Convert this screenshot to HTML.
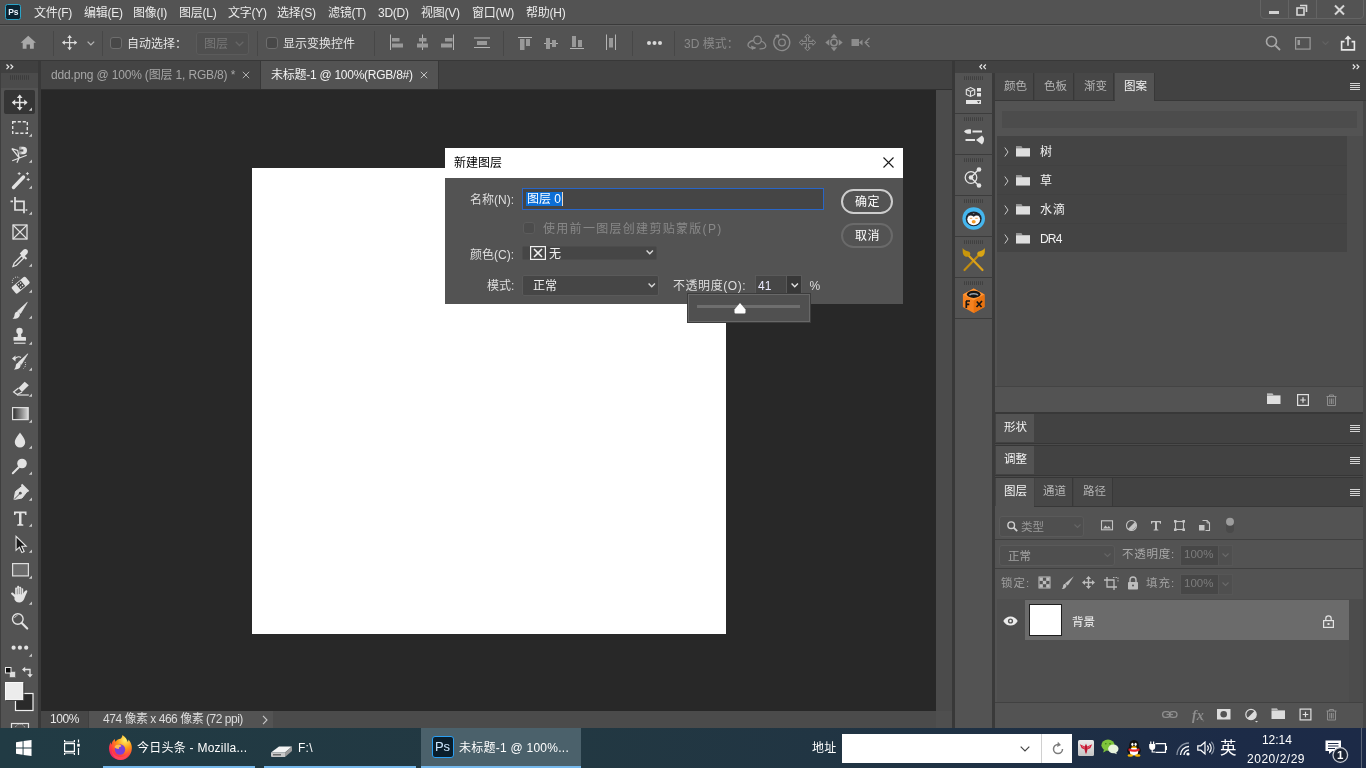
<!DOCTYPE html>
<html lang="zh-CN">
<head>
<meta charset="utf-8">
<title>Photoshop</title>
<style>
*{box-sizing:border-box;margin:0;padding:0}
html,body{width:1366px;height:768px;overflow:hidden;background:#535353}
body{position:relative;font-family:"Liberation Sans","Noto Sans CJK SC",sans-serif;font-size:12px;color:#e6e6e6;-webkit-font-smoothing:antialiased}
.a{position:absolute}
.t{position:absolute;white-space:nowrap;line-height:16px}
svg{position:absolute;overflow:visible}
/* regions */
#menubar{left:0;top:0;width:1366px;height:24px;background:#535353}
#optbar{left:0;top:25px;width:1366px;height:36px;background:#535353;border-top:1px solid #5e5e5e}
#line1{left:0;top:24px;width:1366px;height:1px;background:#3a3a3a}
#line2{left:0;top:60px;width:1366px;height:1px;background:#383838}
#strip{left:0;top:61px;width:1366px;height:12px;background:#424242}
#toolbar{left:0;top:73px;width:38px;height:655px;background:#535353}
#tabbar{left:40.500px;top:61px;width:911.500px;height:29px;background:#424242}
#canvasbg{left:40.500px;top:89.500px;width:895.500px;height:621px;background:#282828}
#doc{left:252px;top:168px;width:474px;height:466px;background:#fff}
#vscroll{left:936px;top:90px;width:16px;height:638px;background:#4b4b4b}
#status{left:40.500px;top:711px;width:895.500px;height:17px;background:#535353}
#taskbar{left:0;top:728px;width:1366px;height:40px;background:linear-gradient(90deg,#213b44 0%,#223842 42%,#213543 60%,#1e2f45 78%,#1c2b47 90%,#1c2a47 100%)}

.mn{top:4.500px;font-size:12px;color:#ebebeb;letter-spacing:-0.250px}
.vs{top:31px;width:1px;height:25px;background:#474747}
.cb{width:12px;height:12px;border:1px solid #6e6e6e;border-radius:3px;background:#484848}

.tk{top:740px;font-size:12px;color:#fff;letter-spacing:0.250px}
.ul{top:766px;height:2px;background:#76b9ed}

.ptab{top:73px;height:27px;background:#474747;border-right:1px solid #383838}
.ltab{top:478px;height:28px;background:#474747;border-right:1px solid #383838}
.pt{font-size:11.500px}
.mi{width:10px;height:7px;background:repeating-linear-gradient(180deg,#d4d4d4 0,#d4d4d4 1px,transparent 1px,transparent 2px)}

.vb{left:1180px;width:38px;height:21px;background:#474747;border:1px solid #565656;border-right:0}
.vb2{left:1218px;width:15px;height:21px;background:#4f4f4f;border:1px solid #565656}

.dl{font-size:12px;color:#dedede}
</style>
</head>
<body>
<div id="wrap" style="position:absolute;left:0;top:0;width:1366px;height:768px;will-change:transform">
<div class="a" id="menubar"></div>
<div class="a" id="line1"></div>
<div class="a" id="optbar"></div>
<div class="a" id="line2"></div>
<div class="a" id="strip"></div>
<div class="a" id="toolbar"></div>
<div class="a" id="tabbar"></div>
<div class="a" id="canvasbg"></div>
<div class="a" id="doc"></div>
<div class="a" id="vscroll"></div>
<div class="a" id="status"></div>

<!-- MENU BAR -->
<div class="a" style="left:5px;top:4px;width:16px;height:15.500px;background:#0b2433;border:1.500px solid #2ba4c8;border-radius:2.500px"></div>
<div class="t" style="left:8.300px;top:3.700px;font-size:8.500px;font-weight:bold;color:#eef6ff;letter-spacing:-0.2px">Ps</div>
<div class="t mn" style="left:34px">文件(F)</div>
<div class="t mn" style="left:84px">编辑(E)</div>
<div class="t mn" style="left:133px">图像(I)</div>
<div class="t mn" style="left:179px">图层(L)</div>
<div class="t mn" style="left:228px">文字(Y)</div>
<div class="t mn" style="left:277px">选择(S)</div>
<div class="t mn" style="left:328px">滤镜(T)</div>
<div class="t mn" style="left:378px">3D(D)</div>
<div class="t mn" style="left:421px">视图(V)</div>
<div class="t mn" style="left:472px">窗口(W)</div>
<div class="t mn" style="left:526px">帮助(H)</div>
<!-- window controls -->
<div class="a" style="left:1260px;top:-2px;width:104px;height:21px;border:1px solid #646464;border-radius:0 0 4px 4px"></div>
<div class="a" style="left:1288px;top:0;width:1px;height:18px;background:#646464"></div>
<div class="a" style="left:1316px;top:0;width:1px;height:18px;background:#646464"></div>
<div class="a" style="left:1269px;top:11px;width:10px;height:3px;background:#d0d0d0"></div>
<svg style="left:1296px;top:4px" width="12" height="12" viewBox="0 0 12 12"><path d="M4 1.5h6.5v6.5" fill="none" stroke="#d6d6d6" stroke-width="1.6"/><rect x="1" y="4" width="7" height="7" fill="none" stroke="#d6d6d6" stroke-width="1.6"/></svg>
<svg style="left:1334px;top:5px" width="11" height="10" viewBox="0 0 11 10"><path d="M1 0.5L10 9.5M10 0.5L1 9.5" fill="none" stroke="#d6d6d6" stroke-width="2"/></svg>

<!-- OPTIONS BAR -->
<svg style="left:19.500px;top:35px" width="16.500" height="14.500" viewBox="0 0 19 17"><path d="M9.5 1L0.5 9h2.5v7h4.5v-5h4v5h4.500v-7h2.500z" fill="#a8a8a8"/></svg>
<div class="a vs" style="left:53px"></div>
<svg style="left:62px;top:35px" width="15.200" height="15.200" viewBox="0 0 19 19"><path d="M9.500 1v17M1 9.500h17" stroke="#dcdcdc" stroke-width="1.500" fill="none"/><path d="M9.500 0l3 3.600h-6zM9.500 19l3-3.600h-6zM0 9.500l3.600-3v6zM19 9.500l-3.600-3v6z" fill="#dcdcdc"/></svg>
<svg style="left:86.500px;top:41px" width="7.800" height="5.200" viewBox="0 0 9 6"><path d="M0.700 0.700l3.800 3.800 3.800-3.800" fill="none" stroke="#b4b4b4" stroke-width="1.500"/></svg>
<div class="a vs" style="left:102px"></div>
<div class="a cb" style="left:110px;top:37px"></div>
<div class="t" style="left:127px;top:36px;font-size:12px;color:#e4e4e4">自动选择：</div>
<div class="a" style="left:196px;top:32px;width:53px;height:23px;border:1px solid #5b5b5b;border-radius:3px;background:#4f4f4f"></div>
<div class="t" style="left:204px;top:36px;font-size:12px;color:#777">图层</div>
<svg style="left:235px;top:41px" width="9" height="6" viewBox="0 0 9 6"><path d="M0.700 0.700l3.800 3.800 3.800-3.800" fill="none" stroke="#666" stroke-width="1.300"/></svg>
<div class="a vs" style="left:257px"></div>
<div class="a cb" style="left:266px;top:37px"></div>
<div class="t" style="left:283px;top:36px;font-size:12px;color:#e4e4e4">显示变换控件</div>
<div class="a vs" style="left:374px"></div>
<svg style="left:380px;top:28px" width="300" height="30" viewBox="380 28 300 30">
<g fill="#999" stroke="none">
<rect x="390" y="34.500" width="1" height="15.500" fill="#b4b4b4"/><rect x="392" y="38" width="7.500" height="3.500"/><rect x="392" y="43.500" width="11" height="4"/>
<rect x="422" y="34.500" width="1" height="15.500" fill="#b4b4b4"/><rect x="419" y="38" width="7.500" height="3.500"/><rect x="417" y="43.500" width="11" height="4"/>
<rect x="453" y="34.500" width="1" height="15.500" fill="#b4b4b4"/><rect x="445" y="38" width="7.500" height="3.500"/><rect x="441" y="43.500" width="11" height="4"/>
<rect x="474" y="37.500" width="16" height="1" fill="#b4b4b4"/><rect x="474" y="47" width="16" height="1" fill="#b4b4b4"/><rect x="477" y="41" width="10" height="4"/>
<rect x="518" y="37" width="14" height="1" fill="#b4b4b4"/><rect x="520" y="39" width="4.500" height="11"/><rect x="526" y="39" width="4" height="7"/>
<rect x="544" y="43" width="14" height="1" fill="#b4b4b4"/><rect x="546" y="38" width="4" height="11"/><rect x="552" y="40" width="4" height="7"/>
<rect x="570" y="48" width="14" height="1" fill="#b4b4b4"/><rect x="572" y="36" width="4" height="11"/><rect x="578" y="40" width="4" height="7"/>
<rect x="606" y="34.500" width="1" height="15.500" fill="#b4b4b4"/><rect x="615" y="34.500" width="1" height="15.500" fill="#b4b4b4"/><rect x="609" y="38" width="4" height="9.500"/>
</g></svg>
<div class="a vs" style="left:503px"></div>
<div class="a vs" style="left:632px"></div>
<div class="a" style="left:647px;top:41px;width:3.500px;height:3.500px;border-radius:2px;background:#d8d8d8;box-shadow:5.500px 0 0 #d8d8d8,11px 0 0 #d8d8d8"></div>
<div class="a vs" style="left:674px"></div>
<div class="t" style="left:684px;top:36px;font-size:12px;color:#8a8a8a">3D 模式：</div>
<svg style="left:745px;top:30px" width="130" height="26" viewBox="745 30 130 26">
<g fill="none" stroke="#8c8c8c" stroke-width="1.300">
<circle cx="757.500" cy="40" r="3.800"/><path d="M753.500 40.500c-4 0.500-6.500 3.500-5 6 1 1.500 4 2 7 1.500M761 41c3 1 5.500 3.500 4.500 6-0.800 1.500-3 2-6 1.800"/><path d="M751 45.500l1 4.500 4-2.500z" fill="#8c8c8c" stroke="none"/>
<path d="M776.500 36.500a8 8 0 1 0 5.500-2"/><circle cx="782" cy="42.500" r="3.300"/><path d="M775 35l4.500-0.500-1 4z" fill="#8c8c8c" stroke="none"/>
<path d="M807.5 34.2L810.3 37.2H808.6V41.4H812.8V39.7L815.8 42.5 812.8 45.3V43.6H808.6V47.8H810.3L807.5 50.8 804.700 47.8H806.4V43.6H802.2V45.3L799.2 42.5 802.2 39.7V41.4H806.4V37.2H804.700Z" stroke-width="1"/>
<circle cx="834" cy="42.500" r="3.200" stroke-width="1.500"/><path d="M834 33.800l3.300 4h-6.600zM834 51.200l3.300-4h-6.600zM825.300 42.500l4-3.300v6.600zM842.700 42.500l-4-3.300v6.600z" fill="#8c8c8c" stroke="none"/>
<rect x="851.500" y="39" width="7.500" height="7" fill="#8c8c8c" stroke="none"/><path d="M859 42.500l3.500-3v6z" fill="#8c8c8c" stroke="none"/><path d="M869.500 38l-4.500 4.500 4.500 4.500" stroke-width="1.100"/><path d="M866 42.500h2.500" stroke-width="1"/>
</g></svg>
<svg style="left:1265px;top:35px" width="16" height="16" viewBox="0 0 16 16"><circle cx="6.500" cy="6.500" r="5" fill="none" stroke="#a8a8a8" stroke-width="1.600"/><path d="M10.300 10.300L15 15" stroke="#a8a8a8" stroke-width="1.800"/></svg>
<svg style="left:1295px;top:37px" width="16" height="13" viewBox="0 0 16 13"><rect x="0.600" y="0.600" width="14.500" height="11.500" fill="none" stroke="#9a9a9a" stroke-width="1.200"/><rect x="2.500" y="3" width="2.500" height="5" fill="#9a9a9a"/></svg>
<svg style="left:1322px;top:41px" width="7" height="5" viewBox="0 0 7 5"><path d="M0.500 0.500l3 3 3-3" fill="none" stroke="#626262" stroke-width="1.100"/></svg>
<svg style="left:1340px;top:34.500px" width="16" height="16" viewBox="0 0 17 18"><path d="M4.500 7.500H1.300V16.700H15.700V7.500H12.500" fill="none" stroke="#e8e8e8" stroke-width="1.800"/><path d="M8.500 12V3" stroke="#e8e8e8" stroke-width="1.800"/><path d="M8.500 0.500l4 4.200h-8z" fill="#e8e8e8"/></svg>
<div class="a" style="left:0;top:61px;width:38px;height:12px;background:#404040"></div>
<div class="a" style="left:0;top:73px;width:38px;height:15px;background:#4b4b4b"></div><div class="a" style="left:0;top:61px;width:1px;height:667px;background:#3e3e3e"></div>
<div class="a" style="left:38px;top:61px;width:2.500px;height:667px;background:#393939"></div>
<div class="a" style="left:4px;top:90px;width:31px;height:23.500px;background:#353535;border-radius:2px"></div>
<svg style="left:0;top:61px" width="40" height="667" viewBox="0 61 40 667">
<g fill="none" stroke="#e2e2e2" stroke-width="1.300" stroke-linecap="butt">
<!-- >> -->
<path d="M6.500 64.500l2.300 2.300-2.300 2.300M10.500 64.500l2.300 2.300-2.300 2.300" stroke="#e8e8e8" stroke-width="1.200"/>
<!-- grip -->
<path d="M10 77.500h19.500" stroke="#3c3c3c" stroke-width="4.500" stroke-dasharray="1 1"/>
<!-- 1 move -->
<path d="M19.700 95.500v14M12.800 102.500h13.800" stroke-width="1.500"/>
<path d="M19.700 94.500l2.900 3.400h-5.800zM19.700 110.500l2.900-3.400h-5.800zM11.800 102.500l3.400-2.900v5.800zM27.600 102.500l-3.400-2.900v5.800z" fill="#e2e2e2" stroke="none"/>
<!-- 2 marquee -->
<rect x="12.700" y="121.700" width="14.600" height="11.600" stroke-dasharray="3.200 1.800" stroke-width="1.400"/>
<!-- 3 magnetic lasso -->
<path d="M11.800 148.600L19 157.500M11.800 148.600L17.700 150.400L19 157M12.200 160.700L26.700 155.200M16.900 162.700L19.600 156.800" stroke-width="1.200"/>
<path d="M19.500 146.800h3.800a3.700 3.700 0 0 1 0 7.400h-3.800z" fill="#e2e2e2" stroke="none"/><rect x="19.500" y="149.400" width="3.800" height="2.200" fill="#535353" stroke="none"/><rect x="20.300" y="147.400" width="1" height="1.200" fill="#535353" stroke="none"/><rect x="20.300" y="152.400" width="1" height="1.200" fill="#535353" stroke="none"/>
<!-- 4 wand -->
<path d="M13.500 187.500l10-10.500" stroke-width="3.400" stroke-linecap="round"/>
<path d="M19.200 172.100v3M17.700 173.600h3M27.400 172.100v3M25.900 173.600h3M28.200 178v3M26.700 179.500h3" stroke-width="0.900"/>
<!-- 5 crop -->
<path d="M15 197v13h9.500M10.500 201.300h2.500M15.800 201.300h8.200v12M25.500 210h1.800" stroke-width="1.700"/>
<!-- 6 frame -->
<rect x="13" y="225" width="14" height="14" stroke-width="1.300"/><path d="M13 225l14 14M27 225l-14 14" stroke-width="1.100"/>
<!-- 7 eyedropper -->
<path d="M13 266.500l1.200-3.500 7.300-7.300 2.300 2.300-7.300 7.300z" stroke-width="1.300"/>
<path d="M21 253.500l5.500 5.500M23.500 256l3-3a1.700 1.700 0 0 0-2.500-2.500l-3 3z" stroke-width="1.800" fill="#e2e2e2"/>
<!-- 8 spot heal -->
<g transform="rotate(-40 20.500 285)"><rect x="11.500" y="281" width="18" height="8.500" rx="1.500" fill="#e2e2e2" stroke="none"/><rect x="17.500" y="281.800" width="6" height="6.900" fill="#444" stroke="none"/>
<circle cx="19.200" cy="283.600" r="0.800" fill="#e2e2e2" stroke="none"/><circle cx="21.800" cy="283.600" r="0.800" fill="#e2e2e2" stroke="none"/><circle cx="19.200" cy="286.600" r="0.800" fill="#e2e2e2" stroke="none"/><circle cx="21.800" cy="286.600" r="0.800" fill="#e2e2e2" stroke="none"/></g>
<path d="M12.500 283a4.500 4.500 0 0 1 7-5" stroke-width="1" stroke-dasharray="1 1.200"/>
<!-- 9 brush -->
<path d="M27.300 302.300L20.600 313.400L17.400 311.200z" fill="#e2e2e2" stroke-width="0.700"/>
<path d="M16.600 311.800c2-0.600 3.800 1.200 3.200 3.400-0.900 3.200-4.400 3.800-7.300 3.600 1.700-1.300 1.800-2.600 2.100-4.200 0.200-1.200 0.800-2.400 2-2.800z" fill="#e2e2e2" stroke="none"/>
<!-- 10 stamp -->
<circle cx="19.500" cy="331" r="3.200" fill="#e2e2e2" stroke="none"/><path d="M18 333.500h3l0.500 4h-4z" fill="#e2e2e2" stroke="none"/><rect x="13.500" y="337" width="12.500" height="3.800" rx="0.600" fill="#e2e2e2" stroke="none"/><path d="M14 343.200h11.500" stroke-width="1.200"/>
<!-- 11 history brush -->
<path d="M27.800 353.800L21.200 364.600L18.200 362.500z" fill="#e2e2e2" stroke-width="0.700"/>
<path d="M17.600 363c1.900-0.600 3.500 1.100 3 3.100-0.800 3-4 3.600-6.700 3.400 1.600-1.200 1.700-2.400 1.900-3.900 0.200-1.100 0.700-2.200 1.800-2.600z" fill="#e2e2e2" stroke="none"/>
<path d="M12 358.500l3.500-3v6z" fill="#e2e2e2" stroke="none"/><path d="M15 358.500c2-1.800 4.500-2 6-1" stroke-width="1.100"/><path d="M25 362c1.200 2.200 0.500 5-1.500 6.500" stroke-width="0.900" stroke-dasharray="1 1.100"/>
<!-- 12 eraser -->
<path d="M18.500 388L24.700 381.800L28.800 385.200L22 392z" fill="#e2e2e2" stroke="none"/><path d="M18.500 388L13.600 392L17.100 394.500L22 392" stroke-width="1.200"/><path d="M17 395h11.800" stroke-width="1.200"/>
<!-- 13 gradient -->
<rect x="12.600" y="407.600" width="15.600" height="12" fill="url(#gr1)" stroke="#dedede" stroke-width="1.200"/>
<!-- 14 blur drop -->
<path d="M20 432.500c2 3 5.200 6.500 5.200 9.700a5.200 5.200 0 0 1-10.400 0c0-3.200 3.200-6.700 5.200-9.700z" fill="#e2e2e2" stroke="none"/>
<!-- 15 dodge -->
<circle cx="22" cy="463.500" r="4.800" fill="#e2e2e2" stroke="none"/><path d="M18.800 467.200l-6 6" stroke-width="2" stroke-linecap="round"/>
<!-- 16 pen -->
<path d="M14 499.500l1.500-8 7-5.500 5 5-5.500 7z" fill="#e2e2e2" stroke-width="1"/><path d="M14.300 499.200l5.700-5.700" stroke="#535353" stroke-width="1"/><circle cx="20.300" cy="493.200" r="1.400" fill="#535353" stroke="none"/><path d="M21.500 484.500l7 7" stroke-width="2"/>
<!-- 17 T -->
<path d="M14 511.500h12.500v3.500h-1.300l-0.600-1.800h-3.100v10.800l1.800 0.500v1.200h-6.100v-1.200l1.800-0.500v-10.800h-3.100l-0.600 1.800h-1.300z" fill="#e2e2e2" stroke="none"/>
<!-- 18 path select arrow -->
<g transform="translate(21 544.5) scale(0.9) translate(-21 -544.5)"><path d="M15.500 535.500v15.500l3.800-3.500 2.700 6 2.500-1.200-2.700-5.800h5z" fill="#1a1a1a" stroke="#e8e8e8" stroke-width="1.200" stroke-linejoin="miter"/></g>
<!-- 19 rectangle -->
<rect x="12.600" y="563.600" width="15.800" height="12.300" fill="#6c6c6c" stroke="#dedede" stroke-width="1.200"/>
<!-- 20 hand -->
<g transform="translate(20 595.5) scale(1.15) translate(-20 -595)"><path d="M15.200 596.500l-2.700-2.500c-0.800-0.800 0.300-2.100 1.300-1.300l2 1.600v-5.300c0-1.200 1.700-1.200 1.700 0v-1.400c0-1.300 1.800-1.300 1.800 0v0.700c0-1.300 1.800-1.300 1.800 0v1.300c0-1.200 1.700-1.200 1.700 0v3.900c0.600-1.500 1.500-2.800 2.600-3 0.900-0.100 1.200 0.700 0.800 1.400-1.100 2-1.700 4.200-2.700 6.400-0.800 1.800-2 2.700-4.100 2.700-2.400 0-3.200-0.800-4.200-2.500z" fill="#e2e2e2" stroke="none"/>
<path d="M17.600 589v5M19.400 588.300v5.500M21.200 589v5" stroke="#535353" stroke-width="0.500"/></g>
<!-- 21 zoom -->
<circle cx="17.800" cy="619" r="5.300" stroke-width="1.400"/><path d="M21.700 623l5.500 5.500" stroke-width="2.200" stroke-linecap="round"/><path d="M14.500 618a3.500 3.500 0 0 1 3-2.500" stroke-width="0.800"/>
<!-- 22 dots -->
<circle cx="13.600" cy="647.700" r="2.100" fill="#e2e2e2" stroke="none"/><circle cx="19.900" cy="647.700" r="2.100" fill="#e2e2e2" stroke="none"/><circle cx="26.200" cy="647.700" r="2.100" fill="#e2e2e2" stroke="none"/>
<!-- swatches mini -->
<rect x="9.500" y="671.500" width="6" height="6" fill="#dcdcdc" stroke="#555" stroke-width="0.600"/><rect x="5.500" y="667.500" width="5.500" height="5.500" fill="#0a0a0a" stroke="#e8e8e8" stroke-width="1"/>
<path d="M24.500 669.500h5.500v5.500" stroke-width="1.300"/><path d="M22 669.500l3.200-2.800v5.600zM30 677.500l-2.800-3.200h5.600z" fill="#e2e2e2" stroke="none"/>
<!-- fg/bg -->
<rect x="15.500" y="693.500" width="17.500" height="17" fill="#2a2a2a" stroke="#f0f0f0" stroke-width="1.200"/>
<rect x="5.500" y="682.500" width="17.500" height="17.500" fill="#ececec" stroke="#fafafa" stroke-width="1"/><path d="M23.900 682.500v18H5.500" stroke="#3a3a3a" stroke-width="0.900"/>
<!-- quick mask -->
<rect x="11.500" y="723.500" width="17" height="10" stroke-width="1.200"/><path d="M15 729a5 5 0 0 1 10 0" stroke-width="0.900" stroke-dasharray="1 1"/>
</g>
<!-- flyout triangles -->
<g fill="#c8c8c8">
<path d="M32 107.5v3.200h-3.200z"/><path d="M32 133.5v3.200h-3.200z"/><path d="M32 159.5v3.200h-3.200z"/><path d="M32 185.5v3.200h-3.200z"/><path d="M32 211.5v3.200h-3.200z"/><path d="M32 263.5v3.200h-3.200z"/><path d="M32 289.5v3.200h-3.200z"/><path d="M32 315.5v3.200h-3.200z"/><path d="M32 341.5v3.200h-3.200z"/><path d="M32 367.5v3.200h-3.200z"/><path d="M32 393.5v3.200h-3.200z"/><path d="M32 419.5v3.200h-3.200z"/><path d="M32 445.5v3.200h-3.200z"/><path d="M32 471.5v3.200h-3.200z"/><path d="M32 497.5v3.200h-3.200z"/><path d="M32 523.5v3.200h-3.200z"/><path d="M32 549.5v3.200h-3.200z"/><path d="M32 575.5v3.200h-3.200z"/><path d="M32 601.5v3.200h-3.200z"/><path d="M32 653.5v3.200h-3.200z"/>
</g>
<defs><linearGradient id="gr1" x1="0" x2="1" y1="0" y2="0"><stop offset="0" stop-color="#2a2a2a"/><stop offset="1" stop-color="#d8d8d8"/></linearGradient></defs>
</svg>


<!-- TABS -->
<div class="a" style="left:40.500px;top:61px;width:219.500px;height:28px;background:#444"></div>
<div class="a" style="left:260px;top:61px;width:178px;height:28px;background:#535353"></div>
<div class="a" style="left:260px;top:61px;width:1px;height:28px;background:#383838"></div>
<div class="a" style="left:438px;top:61px;width:1px;height:28px;background:#383838"></div>
<div class="a" style="left:40.500px;top:89px;width:911.500px;height:1px;background:#303030"></div>
<div class="t" id="tab1" style="left:51px;top:67px;font-size:12px;color:#a6a6a6;letter-spacing:-0.160px">ddd.png @ 100% (图层 1, RGB/8) *</div>
<svg style="left:242px;top:71px" width="8" height="8" viewBox="0 0 8 8"><path d="M0.800 0.800l6.400 6.400M7.200 0.800l-6.400 6.400" stroke="#b0b0b0" stroke-width="1"/></svg>
<div class="t" id="tab2" style="left:271px;top:67px;font-size:12px;color:#f2f2f2;letter-spacing:-0.260px">未标题-1 @ 100%(RGB/8#)</div>
<svg style="left:420px;top:71px" width="8" height="8" viewBox="0 0 8 8"><path d="M0.800 0.800l6.400 6.400M7.200 0.800l-6.400 6.400" stroke="#c4c4c4" stroke-width="1"/></svg>
<!-- STATUS -->
<div class="a" style="left:40.500px;top:711px;width:47.500px;height:17px;background:#474747"></div>
<div class="a" style="left:88px;top:711px;width:1px;height:17px;background:#404040"></div>
<div class="t" id="st1" style="left:50px;top:711px;font-size:12px;color:#e8e8e8;letter-spacing:-0.400px">100%</div>
<div class="t" id="st2" style="left:103px;top:711px;font-size:12px;color:#dcdcdc;letter-spacing:-0.480px">474 像素 x 466 像素 (72 ppi)</div>
<svg style="left:262px;top:715px" width="6" height="10" viewBox="0 0 6 10"><path d="M1 0.800l4 4.200-4 4.200" fill="none" stroke="#c8c8c8" stroke-width="1.100"/></svg>
<div class="a" style="left:273px;top:711px;width:663px;height:17px;background:#4b4b4b"></div><div class="a" style="left:936px;top:711px;width:16px;height:17px;background:#4f4f4f"></div>



<!-- RIGHT SIDE -->
<div class="a" style="left:936px;top:90px;width:16px;height:621px;background:#4b4b4b"></div>
<div class="a" style="left:952px;top:61px;width:3px;height:667px;background:#383838"></div>
<div class="a" style="left:955px;top:61px;width:411px;height:12px;background:#424242"></div>
<div class="a" style="left:955px;top:73px;width:38px;height:655px;background:#535353"></div>
<div class="a" style="left:992px;top:73px;width:3px;height:655px;background:#3a3a3a"></div>
<svg style="left:979px;top:64px" width="8" height="6" viewBox="0 0 8 6"><path d="M3 0.500L0.800 2.800 3 5.100M6.800 0.500L4.600 2.800 6.800 5.100" fill="none" stroke="#e8e8e8" stroke-width="1.200"/></svg>
<svg style="left:1352px;top:64px" width="8" height="6" viewBox="0 0 8 6"><path d="M0.800 0.500L3 2.800 0.800 5.100M4.600 0.500L6.800 2.800 4.600 5.100" fill="none" stroke="#e8e8e8" stroke-width="1.200"/></svg>
<!-- icon strip cells -->
<svg style="left:955px;top:73px" width="38" height="250" viewBox="955 73 38 250">
<g stroke="#3c3c3c" stroke-width="1"><path d="M955 113.500h38M955 154.500h38M955 195.500h38M955 236.500h38M955 277.500h38M955 318.500h38"/></g>
<g stroke="#404040" stroke-width="3" stroke-dasharray="1 1"><path d="M964 78.200h20M964 119.200h20M964 160.200h20M964 201.200h20M964 242.200h20M964 283.200h20" stroke-width="3.800"/></g>
<!-- 1: 3d/learn -->
<g transform="translate(0 1)"><g fill="none" stroke="#e4e4e4" stroke-width="1.100"><path d="M970.500 86.500l4.200 2v5l-4.200 2-4.200-2v-5zM966.300 88.500l4.200 2 4.200-2M970.500 90.500v5"/></g>
<rect x="977" y="87" width="4" height="3.500" fill="#e4e4e4"/><rect x="977" y="92" width="4" height="3.500" fill="#e4e4e4"/><rect x="966" y="99" width="15" height="4" fill="#e4e4e4"/><path d="M977 100.200h3l-1.500 2z" fill="#444"/></g>
<!-- 2: brush settings -->
<path d="M964 131.500c1.500-2 4.500-2.800 7-2v4c-2.500 0.800-5.500 0-7-2z" fill="#e4e4e4"/><rect x="972.500" y="130.500" width="9.500" height="2" fill="#e4e4e4"/>
<rect x="965.500" y="139" width="9.500" height="2" fill="#e4e4e4"/><path d="M976 140l6-4.500v9z" fill="#e4e4e4"/><path d="M982 135.500a6 6 0 0 1 0 9" fill="#e4e4e4"/>
<!-- 3: share/libraries -->
<g fill="none" stroke="#e4e4e4" stroke-width="1.300"><circle cx="971" cy="177.500" r="5.800"/><path d="M971 177.500l7.500-8M971 177.500l7.500 8"/></g><circle cx="971" cy="177.500" r="2.300" fill="#e4e4e4"/><circle cx="979" cy="169.500" r="2.300" fill="#e4e4e4"/><circle cx="979" cy="185.500" r="2.300" fill="#e4e4e4"/>
<!-- 4: penguin blue circle -->
<circle cx="973.700" cy="218.500" r="11.300" fill="#45b6ee"/><ellipse cx="973.700" cy="218.800" rx="8" ry="7.400" fill="#20242c"/><ellipse cx="973.700" cy="219.300" rx="6.400" ry="5.900" fill="#fdfdfd"/><path d="M968 216.500c1.500-3.500 4-4.500 5.700-2.300 1.700-2.200 4.200-1.200 5.700 2.300-1.800-1.300-3.800-1.300-5.700 0.300-1.900-1.600-3.900-1.600-5.700-0.300z" fill="#20242c"/><path d="M969.800 218.300h2.400M975.300 218.300h2.400" stroke="#e8903a" stroke-width="0.900"/><ellipse cx="973.700" cy="221.800" rx="2" ry="1.700" fill="#f59a23"/>
<!-- 5: crossed brushes -->
<g stroke="#c08c10" stroke-width="2.200" stroke-linecap="round"><path d="M964.500 270l13.500-14"/></g><g stroke="#dca21a" stroke-width="2.200" stroke-linecap="round"><path d="M982.500 270l-13.500-14"/></g><path d="M962.500 248c0.500 2.500-0.500 5 1.500 7.500 1.800 2 4.800 1.500 6-0.500 0.800-1.500 0-3-1.500-3.500-2.500-0.800-4.500-1.500-6-3.500z" fill="#c8960c"/><path d="M985 248c-0.500 2.500 0.500 5-1.500 7.500-1.800 2-4.800 1.500-6-0.500-0.800-1.500 0-3 1.500-3.500 2.500-0.800 4.500-1.500 6-3.500z" fill="#d9a514"/>
<!-- 6: fx cube -->
<path d="M973.700 288.500l10.800 6v12.500l-10.800 6-10.800-6v-12.500z" fill="#f58220"/><path d="M973.700 288.500l10.800 6-10.800 6-10.800-6z" fill="#ff9433"/><path d="M973.700 300.500v12.500l10.800-6v-12.500z" fill="#e8720f"/>
<ellipse cx="973.700" cy="294.300" rx="6.800" ry="3.600" fill="#151515"/><path d="M969.500 295.300c1-2.200 7.400-2.200 8.400 0" fill="none" stroke="#9aa4ae" stroke-width="1.500"/>
<path d="M966 301h4M966.300 301v7M966.300 304.300h3" stroke="#151515" stroke-width="1.700" fill="none"/><path d="M976.500 307l5.500-6M976.800 301.500l4.700 5.500" stroke="#151515" stroke-width="1.700"/>
</svg>
<!-- PATTERN PANEL -->
<div class="a" style="left:995px;top:73px;width:371px;height:28px;background:#424242"></div>
<div class="a ptab" style="left:995px;width:39px"></div>
<div class="a ptab" style="left:1035px;width:39px"></div>
<div class="a ptab" style="left:1075px;width:39px"></div>
<div class="a" style="left:1115px;top:73px;width:39px;height:28px;background:#535353"></div>
<div class="a" style="left:995px;top:100px;width:120px;height:1px;background:#383838"></div>
<div class="a" style="left:1154px;top:100px;width:212px;height:1px;background:#383838"></div>
<div class="a" style="left:1154px;top:73px;width:1px;height:27px;background:#383838"></div>
<div class="t pt" style="left:1004px;top:78px;color:#b4b4b4">颜色</div>
<div class="t pt" style="left:1044px;top:78px;color:#b4b4b4">色板</div>
<div class="t pt" style="left:1084px;top:78px;color:#b4b4b4">渐变</div>
<div class="t pt" style="left:1124px;top:78px;color:#f4f4f4">图案</div>
<div class="a mi" style="left:1350px;top:83px"></div>
<div class="a" style="left:995px;top:101px;width:371px;height:35px;background:#535353"></div>
<div class="a" style="left:1002px;top:111px;width:355px;height:17px;background:#4c4c4c"></div>
<div class="a" style="left:995px;top:136px;width:371px;height:251px;background:#535353"></div><div class="a" style="left:997px;top:136px;width:366px;height:250px;background:#4d4d4d"></div>
<div class="a" style="left:997px;top:136px;width:350px;height:116px;background:#444"></div>
<div class="a" style="left:997px;top:165px;width:350px;height:1px;background:#414141"></div>
<div class="a" style="left:997px;top:194px;width:350px;height:1px;background:#414141"></div>
<div class="a" style="left:997px;top:223px;width:350px;height:1px;background:#414141"></div>
<svg style="left:1004px;top:147px" width="5" height="10" viewBox="0 0 5 10"><path d="M0.800 0.500L4 5 0.800 9.500" fill="none" stroke="#c8c8c8" stroke-width="1"/></svg>
<svg style="left:1016px;top:146px" width="14" height="11" viewBox="0 0 14 12" preserveAspectRatio="none"><path d="M0 0.500h5.500l1 1.200H0z" fill="#dedede"/><rect x="0" y="2.400" width="14" height="9.100" fill="#dedede"/></svg>
<div class="t" style="left:1040px;top:144px;font-size:12px;color:#f2f2f2;letter-spacing:1px">树</div>
<svg style="left:1004px;top:176px" width="5" height="10" viewBox="0 0 5 10"><path d="M0.800 0.500L4 5 0.800 9.500" fill="none" stroke="#c8c8c8" stroke-width="1"/></svg>
<svg style="left:1016px;top:175px" width="14" height="11" viewBox="0 0 14 12" preserveAspectRatio="none"><path d="M0 0.500h5.500l1 1.200H0z" fill="#dedede"/><rect x="0" y="2.400" width="14" height="9.100" fill="#dedede"/></svg>
<div class="t" style="left:1040px;top:173px;font-size:12px;color:#f2f2f2;letter-spacing:1px">草</div>
<svg style="left:1004px;top:205px" width="5" height="10" viewBox="0 0 5 10"><path d="M0.800 0.500L4 5 0.800 9.500" fill="none" stroke="#c8c8c8" stroke-width="1"/></svg>
<svg style="left:1016px;top:204px" width="14" height="11" viewBox="0 0 14 12" preserveAspectRatio="none"><path d="M0 0.500h5.500l1 1.200H0z" fill="#dedede"/><rect x="0" y="2.400" width="14" height="9.100" fill="#dedede"/></svg>
<div class="t" style="left:1040px;top:202px;font-size:12px;color:#f2f2f2;letter-spacing:1px">水滴</div>
<svg style="left:1004px;top:234px" width="5" height="10" viewBox="0 0 5 10"><path d="M0.800 0.500L4 5 0.800 9.500" fill="none" stroke="#c8c8c8" stroke-width="1"/></svg>
<svg style="left:1016px;top:233px" width="14" height="11" viewBox="0 0 14 12" preserveAspectRatio="none"><path d="M0 0.500h5.500l1 1.200H0z" fill="#dedede"/><rect x="0" y="2.400" width="14" height="9.100" fill="#dedede"/></svg>
<div class="t" style="left:1040px;top:231px;font-size:12px;color:#f2f2f2;letter-spacing:-0.8px">DR4</div>

<div class="a" style="left:995px;top:386px;width:371px;height:1px;background:#444"></div>
<div class="a" style="left:995px;top:387px;width:371px;height:25px;background:#535353"></div>
<div class="a" style="left:995px;top:412px;width:371px;height:2px;background:#383838"></div>
<svg style="left:1267px;top:393px" width="14" height="12" viewBox="0 0 14 12"><path d="M0 0.500h5.500l1 1.200H0z" fill="#dedede"/><rect x="0" y="2.400" width="13.500" height="8.600" fill="#dedede"/></svg>
<svg style="left:1297px;top:394px" width="12" height="12" viewBox="0 0 12 12"><rect x="0.600" y="0.600" width="10.800" height="10.800" fill="none" stroke="#e0e0e0" stroke-width="1.200"/><path d="M6 3.200v5.600M3.200 6h5.600" stroke="#e0e0e0" stroke-width="1.200"/></svg>
<svg style="left:1326px;top:394px" width="11" height="12" viewBox="0 0 11 12"><g fill="none" stroke="#8e8e8e" stroke-width="1"><path d="M0.500 2.500h10M3.500 2.500v-1.500h4v1.500M1.500 2.500v9h8v-9M3.800 4.500v5.500M5.500 4.500v5.500M7.200 4.500v5.500"/></g></svg>

<!-- SHAPE / ADJUST headers -->
<div class="a" style="left:995px;top:414px;width:371px;height:28px;background:#424242"></div>
<div class="a" style="left:996px;top:414px;width:38px;height:28px;background:#535353"></div>
<div class="t pt" style="left:1004px;top:419px;color:#f4f4f4">形状</div>
<div class="a mi" style="left:1350px;top:425px"></div>
<div class="a" style="left:995px;top:442px;width:371px;height:4px;background:linear-gradient(180deg,#424242 0,#424242 1px,#363636 1px,#363636 2px,#4a4a4a 2px,#4a4a4a 3px,#363636 3px,#363636 4px)"></div>
<div class="a" style="left:995px;top:446px;width:371px;height:28px;background:#424242"></div>
<div class="a" style="left:996px;top:446px;width:38px;height:28px;background:#535353"></div>
<div class="t pt" style="left:1004px;top:451px;color:#f4f4f4">调整</div>
<div class="a mi" style="left:1350px;top:457px"></div>
<div class="a" style="left:995px;top:474px;width:371px;height:4px;background:linear-gradient(180deg,#424242 0,#424242 1px,#363636 1px,#363636 2px,#4a4a4a 2px,#4a4a4a 3px,#363636 3px,#363636 4px)"></div>
<!-- LAYERS -->
<div class="a" style="left:995px;top:478px;width:371px;height:28px;background:#424242"></div>
<div class="a" style="left:996px;top:478px;width:38px;height:29px;background:#535353"></div>
<div class="a ltab" style="left:1035px;width:38px"></div>
<div class="a ltab" style="left:1074px;width:39px"></div>
<div class="a" style="left:1034px;top:506px;width:332px;height:1px;background:#383838"></div>
<div class="t pt" style="left:1004px;top:483px;color:#f4f4f4">图层</div>
<div class="t pt" style="left:1043px;top:483px;color:#b4b4b4">通道</div>
<div class="t pt" style="left:1083px;top:483px;color:#b4b4b4">路径</div>
<div class="a mi" style="left:1350px;top:489px"></div>
<div class="a" style="left:995px;top:507px;width:371px;height:195px;background:#535353"></div>
<div class="a" style="left:995px;top:539px;width:371px;height:1px;background:#404040"></div>
<div class="a" style="left:995px;top:568px;width:371px;height:1px;background:#404040"></div>


<div class="a" style="left:999px;top:516px;width:85px;height:21px;background:#4f4f4f;border:1px solid #5a5a5a;border-radius:3px"></div>
<svg style="left:1007px;top:521px" width="11" height="11" viewBox="0 0 11 11"><circle cx="4.200" cy="4.200" r="3.300" fill="none" stroke="#d0d0d0" stroke-width="1.400"/><path d="M6.700 6.700l3.500 3.500" stroke="#d0d0d0" stroke-width="1.800"/></svg>
<div class="t" style="left:1021px;top:519px;font-size:11.500px;color:#999">类型</div>
<svg style="left:1074px;top:524px" width="7" height="5" viewBox="0 0 7 5"><path d="M0.500 0.500l3 3 3-3" fill="none" stroke="#666" stroke-width="1.100"/></svg>
<svg style="left:1100px;top:516px" width="140" height="20" viewBox="1100 516 140 20">
<g fill="none" stroke="#c4c4c4" stroke-width="1.100">
<rect x="1101.500" y="520.800" width="11" height="9"/><path d="M1103 528.500l2.500-3 1.800 2 1.500-1.500 2.200 2.500z" fill="#c4c4c4" stroke="none"/>
<circle cx="1131.500" cy="525.500" r="5"/><path d="M1128 529a5 5 0 0 0 7-7z" fill="#c4c4c4" stroke="none"/>
<path d="M1151 521h10v2.800h-1l-0.500-1.500h-2.500v7l1.400 0.400v0.900h-4.800v-0.900l1.400-0.400v-7h-2.500l-0.500 1.500h-1z" fill="#c4c4c4" stroke="none"/>
<rect x="1175.500" y="521.500" width="8" height="8"/><rect x="1174" y="520" width="2.600" height="2.600" fill="#c4c4c4" stroke="none"/><rect x="1182.400" y="520" width="2.600" height="2.600" fill="#c4c4c4" stroke="none"/><rect x="1174" y="528.400" width="2.600" height="2.600" fill="#c4c4c4" stroke="none"/><rect x="1182.400" y="528.400" width="2.600" height="2.600" fill="#c4c4c4" stroke="none"/>
<path d="M1202.500 520.500h4.500l2.500 2.500v7.500h-4"/><path d="M1207 520.500v2.500h2.500" stroke-width="0.800"/><rect x="1199" y="525" width="5.500" height="5.500" fill="#c4c4c4" stroke="none"/>
</g>
<rect x="1226" y="518" width="8" height="15" rx="4" fill="#4a4a4a"/><circle cx="1230" cy="521.700" r="4" fill="#9c9c9c"/>
</svg>
<div class="a" style="left:999px;top:545px;width:116px;height:21px;background:#4f4f4f;border:1px solid #5a5a5a;border-radius:3px"></div>
<div class="t" style="left:1008px;top:548px;font-size:11.500px;color:#a4a4a4">正常</div>
<svg style="left:1104px;top:553px" width="7" height="5" viewBox="0 0 7 5"><path d="M0.500 0.500l3 3 3-3" fill="none" stroke="#666" stroke-width="1.100"/></svg>
<div class="t" style="left:1122px;top:546px;font-size:11.500px;color:#a8a8a8;letter-spacing:0.750px">不透明度:</div>
<div class="a vb" style="top:545px"></div><div class="a vb2" style="top:545px"></div>
<div class="t" style="left:1184px;top:546px;font-size:11.500px;color:#7c7c7c">100%</div>
<svg style="left:1222px;top:553px" width="7" height="5" viewBox="0 0 7 5"><path d="M0.500 0.500l3 3 3-3" fill="none" stroke="#6a6a6a" stroke-width="1.100"/></svg>
<div class="t" style="left:1001px;top:575px;font-size:11.500px;color:#a0a0a0;letter-spacing:1px">锁定:</div>
<svg style="left:1036px;top:574px" width="106" height="18" viewBox="1036 574 106 18">
<g fill="#bdbdbd" stroke="none">
<rect x="1039" y="577" width="11" height="11" fill="none" stroke="#bdbdbd" stroke-width="1"/><rect x="1039.500" y="577.500" width="3.400" height="3.400"/><rect x="1046.200" y="577.500" width="3.400" height="3.400"/><rect x="1042.800" y="580.800" width="3.400" height="3.400"/><rect x="1039.500" y="584.200" width="3.400" height="3.400"/><rect x="1046.200" y="584.200" width="3.400" height="3.400"/>
<path d="M1073.800 576.300l-6 9.200-2.800-2z"/><path d="M1064.300 584c1.300-0.400 2.500 0.800 2.100 2.300-0.600 2.200-2.800 2.800-4.800 2.800 1.200-1 1.300-2 1.500-3.200 0.100-0.800 0.500-1.600 1.200-1.900z"/>
<path d="M1088.500 576l2.600 3h-1.900v2.800h2.800v-1.900l3 2.600-3 2.600v-1.900h-2.800v2.800h1.900l-2.600 3-2.600-3h1.900v-2.800h-2.800v1.900l-3-2.600 3-2.600v1.900h2.800v-2.800h-1.900z"/>
<path d="M1107 577v10h10M1104 580h10v10" fill="none" stroke="#bdbdbd" stroke-width="1.300"/><path d="M1113 577.500h5v5" fill="none" stroke="#bdbdbd" stroke-width="0.900" stroke-dasharray="1.500 1"/>
<rect x="1128" y="582" width="10" height="7.500" rx="0.800"/><path d="M1130 582v-2a3 3 0 0 1 6 0v2" fill="none" stroke="#bdbdbd" stroke-width="1.400"/><circle cx="1133" cy="585.500" r="1" fill="#535353"/>
</g></svg>
<div class="t" style="left:1146px;top:575px;font-size:11.500px;color:#a0a0a0;letter-spacing:1px">填充:</div>
<div class="a vb" style="top:574px"></div><div class="a vb2" style="top:574px"></div>
<div class="t" style="left:1184px;top:575px;font-size:11.500px;color:#7c7c7c">100%</div>
<svg style="left:1222px;top:582px" width="7" height="5" viewBox="0 0 7 5"><path d="M0.500 0.500l3 3 3-3" fill="none" stroke="#6a6a6a" stroke-width="1.100"/></svg>

<div class="a" style="left:997px;top:599px;width:367px;height:103px;background:#4c4c4c"></div><div class="a" style="left:997px;top:599px;width:28px;height:41px;background:#4f4f4f"></div><div class="a" style="left:997px;top:640px;width:352px;height:62px;background:#4f4f4f"></div>
<div class="a" style="left:995px;top:702px;width:371px;height:1px;background:#414141"></div>
<div class="a" style="left:995px;top:703px;width:371px;height:25px;background:#535353"></div>

<div class="a" style="left:1025px;top:600px;width:324px;height:40px;background:#6b6b6b"></div>
<div class="a" style="left:1029px;top:604px;width:33px;height:32px;background:#fff;border:1px solid #1e1e1e"></div>
<div class="t" style="left:1072px;top:614px;font-size:11.500px;color:#f6f6f6">背景</div>

<svg style="left:1003px;top:616px" width="15" height="10" viewBox="0 0 15 10"><path d="M0.300 5C2 2 4.500 0.500 7.500 0.500S13 2 14.700 5C13 8 10.500 9.500 7.500 9.500S2 8 0.300 5z" fill="#ececec"/><circle cx="7.500" cy="5" r="2.600" fill="#535353"/><circle cx="7.500" cy="5" r="1.200" fill="#ececec"/></svg>
<svg style="left:1323px;top:615px" width="11" height="13" viewBox="0 0 11 13"><rect x="0.600" y="5.600" width="9.800" height="6.800" fill="none" stroke="#e4e4e4" stroke-width="1.200"/><path d="M2.800 5.500v-2a2.700 2.700 0 0 1 5.400 0v2" fill="none" stroke="#e4e4e4" stroke-width="1.200"/><rect x="4.500" y="8" width="2" height="2" fill="#e4e4e4"/></svg>
<svg style="left:1160px;top:706px" width="180" height="18" viewBox="1160 706 180 18">
<g fill="none" stroke="#8e8e8e" stroke-width="1.300">
<rect x="1162.600" y="711.600" width="7.500" height="5.800" rx="2.900"/><rect x="1169.500" y="711.600" width="7.500" height="5.800" rx="2.900"/><path d="M1166.500 714.500h6.500"/>
</g>
<text x="1192" y="719.500" font-family="Liberation Serif, serif" font-style="italic" font-weight="bold" font-size="14" fill="#8e8e8e">fx</text>
<path d="M1202 720.500h2.500l-1.250 1.300z" fill="#7a7a7a"/>
<rect x="1217" y="709" width="13.500" height="10.500" fill="#dcdcdc"/><circle cx="1223.700" cy="714.200" r="3.300" fill="#535353"/>
<circle cx="1251" cy="714.500" r="5.200" fill="none" stroke="#dcdcdc" stroke-width="1.200"/><path d="M1247.300 718.200a5.200 5.200 0 0 0 7.400-7.400z" fill="#dcdcdc"/><path d="M1255 721h3l-1.500 1.500z" fill="#dcdcdc"/>
<path d="M1271.500 708.500h5.500l1 1.200h-6.500z" fill="#dcdcdc"/><rect x="1271.500" y="710.400" width="13.500" height="8.600" fill="#dcdcdc"/>
<rect x="1300.100" y="709.100" width="10.800" height="10.800" fill="none" stroke="#e0e0e0" stroke-width="1.200"/><path d="M1305.500 711.700v5.600M1302.700 714.500h5.600" stroke="#e0e0e0" stroke-width="1.200"/>
<g fill="none" stroke="#8e8e8e" stroke-width="1"><path d="M1326.500 711h10M1329.500 711v-1.500h4v1.500M1327.500 711v9h8v-9M1329.800 713v5.500M1331.500 713v5.500M1333.200 713v5.500"/></g>
</svg>



<div class="a" style="left:1363px;top:101px;width:3px;height:627px;background:#464646"></div>
<!-- DIALOG -->
<div class="a" style="left:445px;top:148px;width:458px;height:156px;background:#535353"></div>
<div class="a" style="left:445px;top:148px;width:458px;height:30px;background:#fff"></div>
<div class="t" style="left:454px;top:155px;font-size:12px;color:#000">新建图层</div>
<svg style="left:883px;top:157px" width="11" height="11" viewBox="0 0 11 11"><path d="M0.500 0.500l10 10M10.500 0.500l-10 10" stroke="#1a1a1a" stroke-width="1.100"/></svg>
<div class="t dl" style="left:470px;top:192px">名称(N):</div>
<div class="a" style="left:521.500px;top:187.500px;width:302px;height:22.500px;background:#454545;border:1.500px solid #2966c8"></div>
<div class="a" style="left:526px;top:192px;width:36px;height:14px;background:#0d6fd6"></div>
<div class="t" style="left:527px;top:191px;font-size:12px;color:#fff">图层 0</div>
<div class="a" style="left:562px;top:192px;width:1px;height:14px;background:#f0d8c0"></div>
<div class="a" style="left:523px;top:222px;width:12px;height:12px;border:1px solid #5c5c5c;border-radius:3px;background:#4c4c4c"></div>
<div class="t" style="left:543px;top:221px;font-size:12px;color:#888;letter-spacing:1.300px">使用前一图层创建剪贴蒙版(P)</div>
<div class="t dl" style="left:470px;top:246.500px">颜色(C):</div>
<div class="a" style="left:522px;top:246px;width:135px;height:14px;background:#464646;border-radius:2px;border:1px solid #4c4c4c"></div>
<svg style="left:530px;top:246px" width="16" height="14" viewBox="0 0 16 14"><rect x="0.600" y="0.600" width="14.800" height="12.800" fill="#464646" stroke="#f0f0f0" stroke-width="1.200"/><path d="M4 3l8 8M12 3l-8 8" stroke="#f0f0f0" stroke-width="1.600"/></svg>
<div class="t" style="left:549px;top:245.500px;font-size:12px;color:#f0f0f0">无</div>
<svg style="left:646px;top:250px" width="7.500" height="5" viewBox="0 0 9 6"><path d="M0.700 0.700l3.800 3.800 3.800-3.800" fill="none" stroke="#d8d8d8" stroke-width="1.700"/></svg>
<div class="t dl" style="left:487px;top:277.500px">模式:</div>
<div class="a" style="left:522px;top:275px;width:137px;height:21px;background:#464646;border:1px solid #5a5a5a;border-radius:2px"></div>
<div class="t" style="left:533px;top:277.500px;font-size:12px;color:#f0f0f0">正常</div>
<svg style="left:648px;top:283px" width="7.500" height="5" viewBox="0 0 9 6"><path d="M0.700 0.700l3.800 3.800 3.800-3.800" fill="none" stroke="#d8d8d8" stroke-width="1.700"/></svg>
<div class="t dl" style="left:673px;top:277.500px;letter-spacing:0.550px">不透明度(O):</div>
<div class="a" style="left:755px;top:275px;width:32px;height:21px;background:#464646;border:1px solid #5a5a5a"></div>
<div class="t" style="left:758px;top:277.500px;font-size:12px;color:#eaeaff">41</div>
<div class="a" style="left:787px;top:275px;width:15px;height:21px;background:#383838;border:1px solid #5a5a5a;border-left:0"></div>
<svg style="left:791px;top:283px" width="7.500" height="5" viewBox="0 0 9 6"><path d="M0.700 0.700l3.800 3.800 3.800-3.800" fill="none" stroke="#e4e4e4" stroke-width="1.700"/></svg>
<div class="t dl" style="left:809.500px;top:277.500px">%</div>
<div class="a" style="left:840.500px;top:188.500px;width:52.500px;height:25.500px;border:2px solid #cdcdcd;border-radius:13px"></div>
<div class="t" style="left:855px;top:194px;font-size:12px;color:#fff;letter-spacing:0.500px">确定</div>
<div class="a" style="left:840.500px;top:222.500px;width:52.500px;height:25.500px;border:2px solid #6a6a6a;border-radius:13px"></div>
<div class="t" style="left:855px;top:228px;font-size:12px;color:#fff;letter-spacing:0.500px">取消</div>
<!-- slider popup -->
<div class="a" style="left:688px;top:294px;width:122px;height:28px;background:#505050;border:1px solid #686868;box-shadow:0 0 0 1px #3c3c3c"></div>
<div class="a" style="left:697px;top:305px;width:103px;height:3px;background:#6e6e6e"></div>
<svg style="left:734px;top:303px" width="12" height="11" viewBox="0 0 12 11"><path d="M6 0L11.500 6.500V9.500Q11.500 10.500 10.500 10.500H1.500Q0.500 10.500 0.500 9.500V6.500z" fill="#fff"/></svg>

<div class="a" id="taskbar"></div>

<!-- TASKBAR CONTENT -->
<svg style="left:16px;top:740px" width="16" height="16" viewBox="0 0 17 17"><path d="M0 2.300L7 1.300V8H0zM8 1.150L16.500 0V8H8zM0 9H7V15.700L0 14.700zM8 9H16.500V17L8 15.850z" fill="#fff"/></svg>
<svg style="left:63px;top:739px" width="18" height="17" viewBox="0 0 18 17"><g fill="none" stroke="#fff" stroke-width="1.200"><rect x="1.600" y="4.600" width="9.800" height="7.800"/><path d="M1.600 1v2M11.400 1v2M1.600 3h9.800M1.600 16v-2M11.400 16v-2M1.600 14h9.800M15.500 0.500v3M15.500 9v7"/></g><rect x="14.200" y="4.800" width="2.600" height="2.800" fill="#fff"/></svg>
<!-- firefox -->
<svg style="left:108px;top:735px" width="26" height="26" viewBox="0 0 26 26">
<defs><radialGradient id="ffg" cx="0.700" cy="0.200" r="0.950"><stop offset="0" stop-color="#fff36b"/><stop offset="0.350" stop-color="#ff9d17"/><stop offset="0.700" stop-color="#ff3d3d"/><stop offset="1" stop-color="#e5127d"/></radialGradient></defs>
<path d="M13 3.500c1-1.500 1.500-2.500 1.300-3.500 3 2 5 4.500 5.500 7 0.500-0.800 0.700-1.600 0.600-2.500 3 3 4.300 7.500 3 12-1.500 5-6 8.500-11 8.500-6.500 0-11.400-5-11.400-11.500 0-2.500 0.600-4.500 1.800-6.300 0 1 0.200 1.800 0.700 2.500 0.300-2.700 1.700-4.700 3.500-5.700-0.200 1 0 2 0.500 2.800 1.200-1.800 3.200-3 5.500-3.300z" fill="url(#ffg)"/>
<circle cx="12" cy="14.500" r="5.200" fill="#7b3fd8"/><path d="M6.500 12c1.500-2.500 4-3 6-2 1 0.500 1 1.500 0 1.700-1.500 0.300-2 1-1.500 2.300-2 0-3.800-0.700-4.500-2z" fill="#ffbd4f"/>
<path d="M4 15c1 5 5 7.500 9.500 7 4-0.500 7-3.500 7.500-7.500 0.500 6-3.500 10.500-8.500 10.500-5 0-8.500-4-8.500-10z" fill="#ff4f5e" opacity="0.700"/>
</svg>
<div class="t tk" style="left:137px">今日头条 - Mozilla...</div>
<div class="a ul" style="left:103px;width:152px"></div>
<!-- drive -->
<svg style="left:270px;top:744px" width="24" height="15" viewBox="0 0 24 15"><path d="M1 8.500L9 2.500h13L15 8.500z" fill="#f4f4f4"/><path d="M1 8.500h14v4.500H2a1 1 0 0 1-1-1z" fill="#c8c8c8"/><path d="M15 8.500l7-6v4.500l-7 6z" fill="#9a9a9a"/><rect x="3" y="10" width="8" height="1.500" fill="#6a6a6a"/></svg>
<div class="t tk" style="left:298px">F:\</div>
<div class="a ul" style="left:264px;width:152px"></div>
<!-- ps button -->
<div class="a" style="left:421px;top:728px;width:160px;height:40px;background:#4b616b"></div>
<div class="a" style="left:432px;top:736px;width:22px;height:22px;background:#0a1e2c;border:1.500px solid #2aa0f5;border-radius:3px"></div>
<div class="t" style="left:435px;top:739px;font-size:13px;color:#cfe8ff;letter-spacing:-0.200px">Ps</div>
<div class="t tk" style="left:459px">未标题-1 @ 100%...</div>
<div class="a ul" style="left:421px;width:160px"></div>
<!-- address -->
<div class="t tk" style="left:812px">地址</div>
<div class="a" style="left:842px;top:734px;width:230px;height:29px;background:#fff"></div>
<div class="a" style="left:1041px;top:734px;width:1px;height:29px;background:#d0d0d0"></div>
<svg style="left:1020px;top:746px" width="10" height="6" viewBox="0 0 10 6"><path d="M0.700 0.700l4.300 4.300 4.300-4.300" fill="none" stroke="#444" stroke-width="1.200"/></svg>
<svg style="left:1052px;top:742px" width="12" height="13" viewBox="0 0 12 13"><path d="M6 2.500a4.500 4.500 0 1 0 4.500 4.500" fill="none" stroke="#7c7c7c" stroke-width="1.500"/><path d="M5.500 0l3.500 2.600-3.500 2.600z" fill="#7c7c7c" transform="rotate(8 7 2.600)"/></svg>
<!-- tray: flag -->
<div class="a" style="left:1078px;top:740px;width:16px;height:16px;background:linear-gradient(180deg,#ececec,#c4c4c4);border-radius:1.500px"></div>
<svg style="left:1078px;top:740px" width="16" height="16" viewBox="0 0 16 16"><path d="M1.800 4.200L6.800 6.600L8 3.500L9.200 6.600L14.200 4.200L12.300 8.300L9.600 9.300L8 14.500L6.400 9.300L3.700 8.300Z" fill="#d4203a"/><path d="M8 5.500v7" stroke="#8e0f24" stroke-width="0.900"/><path d="M4 6.200l3 2M12 6.200l-3 2" stroke="#f08a9a" stroke-width="0.600"/></svg>
<!-- wechat -->
<svg style="left:1101px;top:739px" width="18" height="16" viewBox="0 0 18 16"><ellipse cx="7" cy="6.200" rx="6.600" ry="5.600" fill="#7ec53b"/><path d="M3 10.500l-0.800 3 3.300-1.700z" fill="#7ec53b"/><ellipse cx="12.300" cy="9.800" rx="5.200" ry="4.400" fill="#e8f4dc"/><path d="M15 13l0.800 2.200-2.800-1.300z" fill="#e8f4dc"/><circle cx="4.800" cy="4.800" r="0.800" fill="#3b7a14"/><circle cx="9" cy="4.800" r="0.800" fill="#3b7a14"/></svg>
<!-- qq -->
<svg style="left:1125px;top:739px" width="18" height="18" viewBox="0 0 18 18"><ellipse cx="9" cy="11.500" rx="6.800" ry="5" fill="#111"/><ellipse cx="9" cy="6.500" rx="4.800" ry="5.500" fill="#111"/><ellipse cx="9" cy="12.500" rx="4.200" ry="4" fill="#fff"/><path d="M3.800 9.300c3 1.700 7.400 1.700 10.400 0l0.500 2.200c-3.500 1.800-7.900 1.800-11.400 0z" fill="#e8252d"/><ellipse cx="7.400" cy="5.300" rx="1.100" ry="1.600" fill="#fff"/><ellipse cx="10.600" cy="5.300" rx="1.100" ry="1.600" fill="#fff"/><ellipse cx="9" cy="8.200" rx="2.800" ry="0.900" fill="#f8b500"/><ellipse cx="5.300" cy="16.500" rx="2.800" ry="1.200" fill="#f8b500"/><ellipse cx="12.700" cy="16.500" rx="2.800" ry="1.200" fill="#f8b500"/></svg>
<!-- battery -->
<svg style="left:1149px;top:741px" width="18" height="13" viewBox="0 0 18 13"><g fill="none" stroke="#fff" stroke-width="1.200"><path d="M6.500 2.600h10v8.800h-10"/><path d="M1.800 0.500v3M4.600 0.500v3"/><path d="M0.800 3.500h4.800v2.500a2.400 2.400 0 0 1-4.800 0z" fill="#fff"/><path d="M3.200 8.500v2.500h3"/></g><rect x="16.500" y="5" width="1.500" height="4" fill="#fff"/></svg>
<!-- wifi -->
<svg style="left:1176px;top:742px" width="15" height="14" viewBox="0 0 15 14"><g fill="none" stroke-width="1.300"><path d="M1 13A12 12 0 0 1 13 1" stroke="#8a94a4"/><path d="M4.500 13A8.500 8.500 0 0 1 13 4.500" stroke="#fff"/><path d="M8 13A5 5 0 0 1 13 8" stroke="#fff"/></g><circle cx="12" cy="12" r="1.600" fill="#fff"/></svg>
<!-- volume -->
<svg style="left:1197px;top:741px" width="17" height="14" viewBox="0 0 17 14"><g fill="none" stroke="#fff" stroke-width="1.200"><path d="M0.800 4.800h3L8 1v12L3.800 9.200h-3z"/><path d="M10.300 4.500a3.500 3.500 0 0 1 0 5"/><path d="M12.300 2.500a6.300 6.300 0 0 1 0 9"/><path d="M14.300 0.800a8.700 8.700 0 0 1 0 12.400" stroke="#8a94a4"/></g></svg>
<div class="t" style="left:1220px;top:737px;font-size:16.500px;line-height:22px;color:#fff">英</div>
<div class="t" style="left:1262px;top:732px;font-size:12px;color:#fff;letter-spacing:-0.050px">12:14</div>
<div class="t" style="left:1247px;top:751px;font-size:12px;color:#fff;letter-spacing:0.520px">2020/2/29</div>
<!-- notification -->
<svg style="left:1325px;top:740px" width="24" height="24" viewBox="0 0 24 24"><path d="M0.500 0.500h15.500v10.500h-8.500l-3.500 3v-3h-3.500z" fill="#fff"/><path d="M3 3.500h10.500M3 6h10.500M3 8.500h7" stroke="#1c2b47" stroke-width="1"/><circle cx="15.300" cy="15" r="7.300" fill="#1a2334" stroke="#c8ccd4" stroke-width="1.300"/></svg>
<div class="t" style="left:1337px;top:747px;font-size:11.500px;font-weight:bold;color:#fff">1</div>
<div class="a" style="left:1361px;top:728px;width:1px;height:40px;background:#5a6476"></div>

</div>
</body>
</html>
